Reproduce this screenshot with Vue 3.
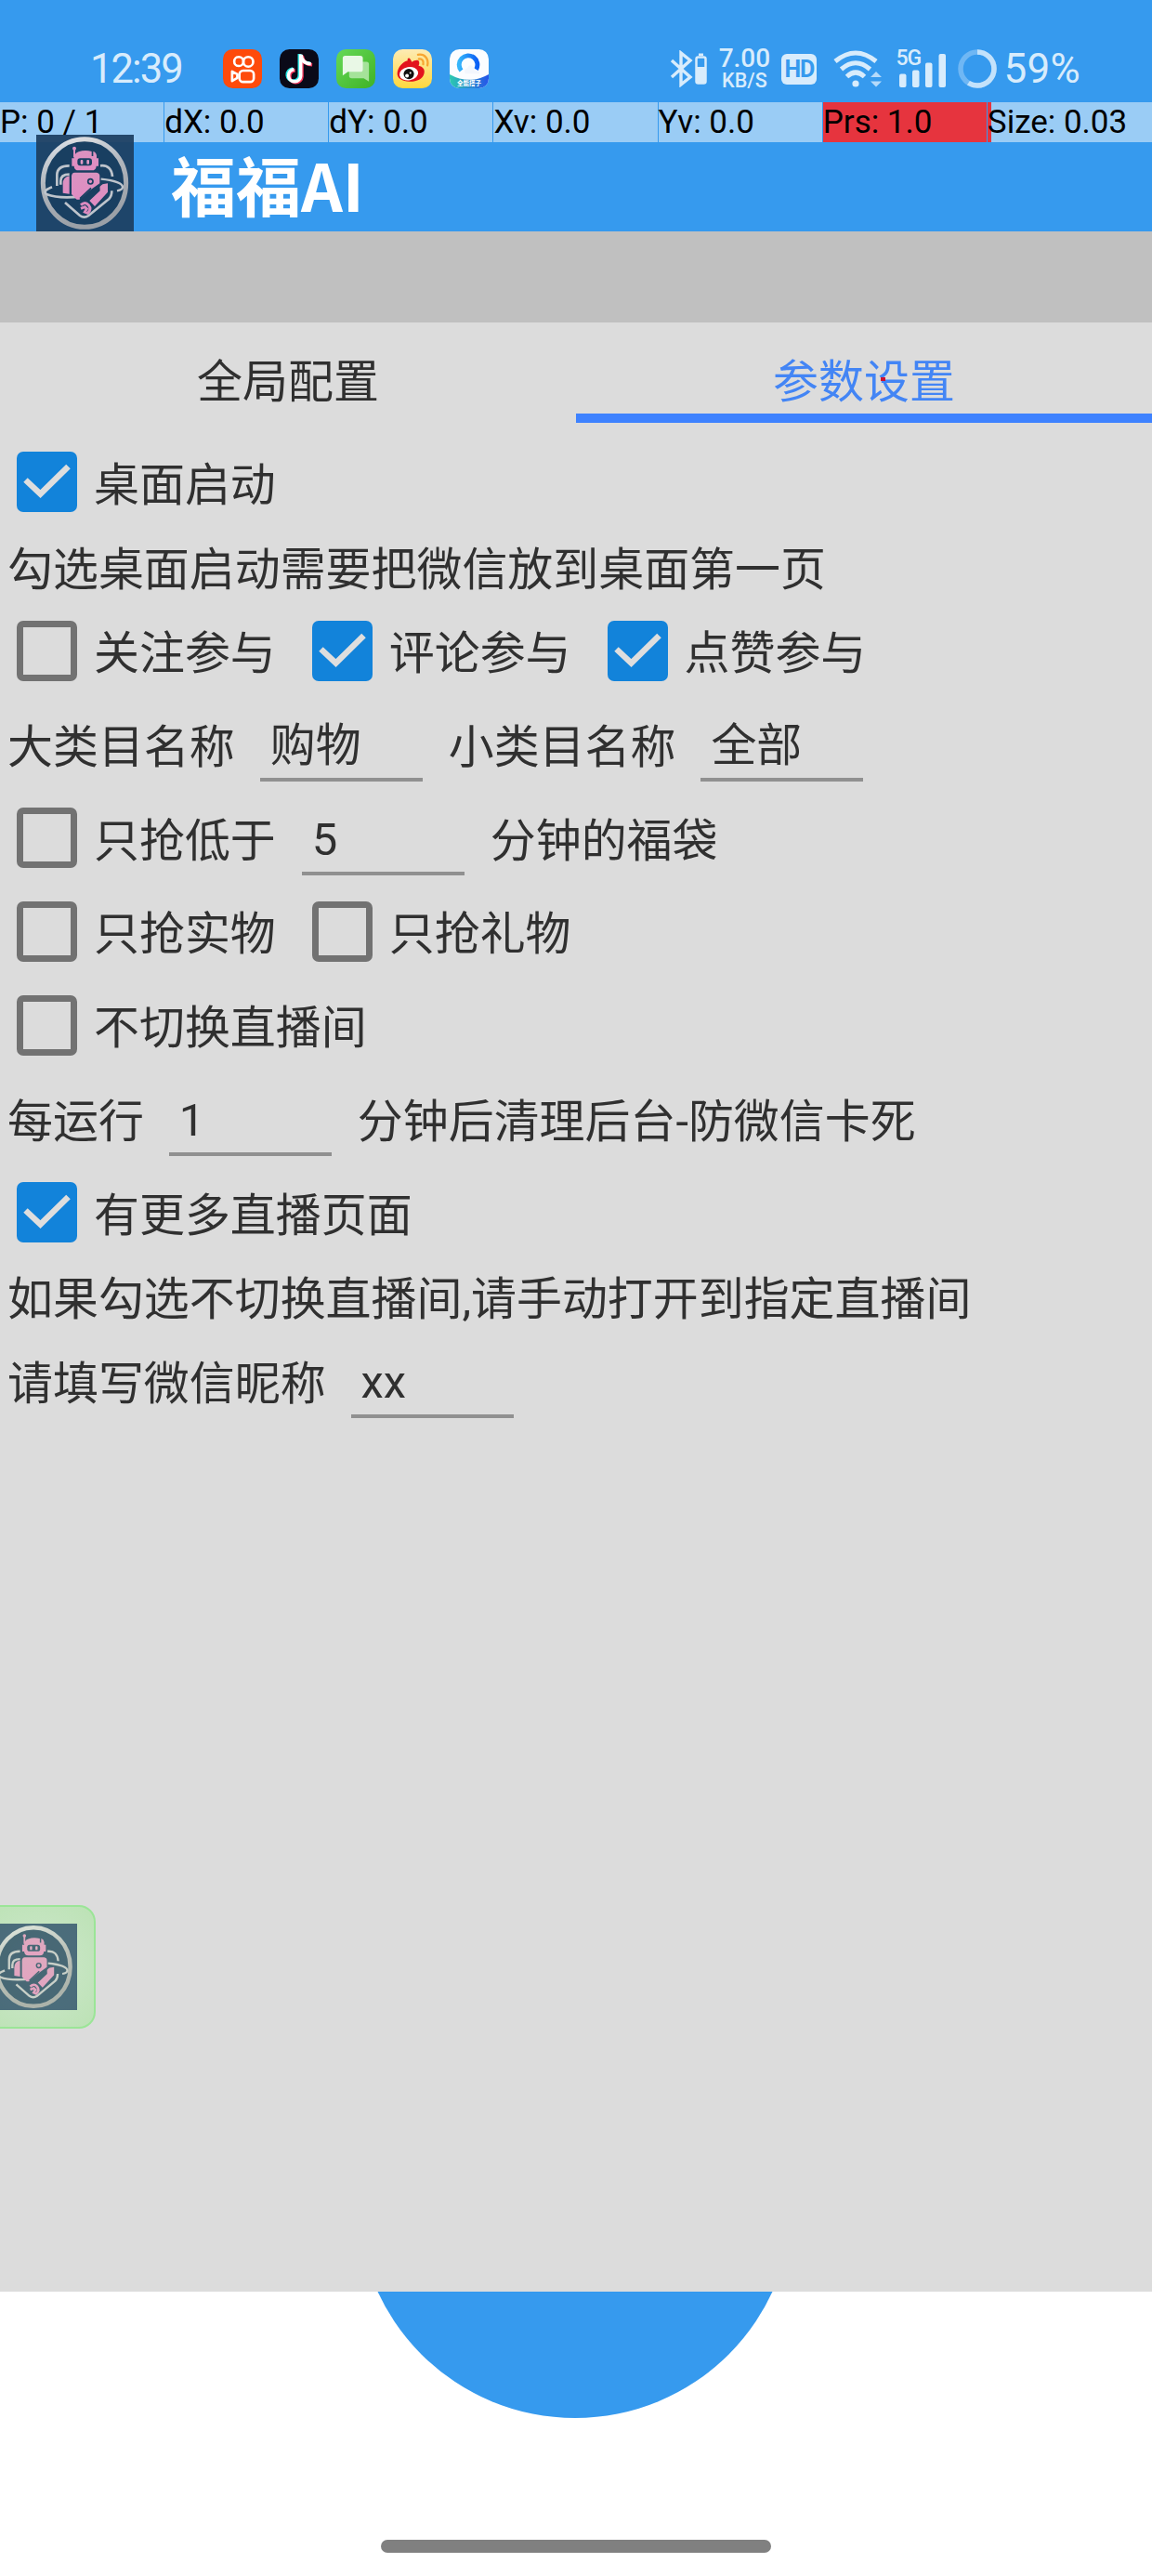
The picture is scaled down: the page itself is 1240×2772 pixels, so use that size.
<script setup>
import { reactive, ref } from 'vue'

const pointerStats = [
  { text: 'P: 0 / 1' },
  { text: 'dX: 0.0' },
  { text: 'dY: 0.0' },
  { text: 'Xv: 0.0' },
  { text: 'Yv: 0.0' },
  { text: 'Prs: 1.0', hot: true },
  { text: 'Size: 0.03', edge: true }
]

const tabs = ['全局配置', '参数设置']
const activeTab = ref(1)

// every row is a list of checks, labels and inputs, drawn from left to right
const rows = reactive([
  { tall: true, items: [{ type: 'check', text: '桌面启动', on: true }] },
  { items: [{ type: 'label', text: '勾选桌面启动需要把微信放到桌面第一页' }] },
  {
    tall: true,
    items: [
      { type: 'check', text: '关注参与', on: false },
      { type: 'check', text: '评论参与', on: true },
      { type: 'check', text: '点赞参与', on: true }
    ]
  },
  {
    tall: true,
    items: [
      { type: 'label', text: '大类目名称' },
      { type: 'input', value: '购物' },
      { type: 'label', text: '小类目名称' },
      { type: 'input', value: '全部' }
    ]
  },
  {
    tall: true,
    items: [
      { type: 'check', text: '只抢低于', on: false },
      { type: 'input', value: '5' },
      { type: 'label', text: '分钟的福袋' }
    ]
  },
  {
    tall: true,
    items: [
      { type: 'check', text: '只抢实物', on: false },
      { type: 'check', text: '只抢礼物', on: false }
    ]
  },
  { tall: true, items: [{ type: 'check', text: '不切换直播间', on: false }] },
  {
    tall: true,
    items: [
      { type: 'label', text: '每运行' },
      { type: 'input', value: '1' },
      { type: 'label', text: '分钟后清理后台-防微信卡死' }
    ]
  },
  { tall: true, items: [{ type: 'check', text: '有更多直播页面', on: true }] },
  { items: [{ type: 'label', text: '如果勾选不切换直播间,请手动打开到指定直播间' }] },
  {
    tall: true,
    items: [
      { type: 'label', text: '请填写微信昵称' },
      { type: 'input', value: 'xx' }
    ]
  }
])
</script>

<template>
  <div class="screen">
    <!-- shared robot emblem -->
    <svg class="defs" width="0" height="0">
      <defs>
        <linearGradient id="silver" x1="0" y1="0" x2="0.3" y2="1">
          <stop offset="0" stop-color="#eceaea" />
          <stop offset="0.5" stop-color="#b9b7b8" />
          <stop offset="1" stop-color="#a3a1a2" />
        </linearGradient>
        <linearGradient id="pink" x1="0" y1="0" x2="0" y2="1">
          <stop offset="0" stop-color="#e893bd" />
          <stop offset="1" stop-color="#ee8cc0" />
        </linearGradient>
      </defs>
      <symbol id="robot" viewBox="27 15 315 312" preserveAspectRatio="none">
        <rect x="27" y="15" width="315" height="312" fill="#1d3f61" />
        <ellipse cx="183" cy="171" rx="134" ry="142" fill="#173957" stroke="url(#silver)" stroke-width="15" />
        <g fill="none" stroke="#c9c8ca" stroke-width="8">
          <path d="M94 180 V145 C94 122 110 115 134 115" />
          <path d="M106 176 V164 C106 148 116 143 134 143" />
          <path d="M234 115 C258 112 271 126 273 150" />
          <path d="M120 234 L168 276 Q182 286 196 276 L262 222 Q271 213 271 196" />
          <path d="M236 158 C276 162 306 172 306 184 C306 190 300 194 288 196" stroke-width="7" />
          <path d="M78 184 C58 192 48 200 62 208 C82 216 124 219 170 215" stroke-width="8" />
        </g>
        <g fill="url(#pink)">
          <circle cx="150" cy="59" r="6" />
          <rect x="147" y="62" width="6" height="26" />
          <path d="M164 70 Q184 63 206 69 V84 H211 V69 Q220 71 222 82 V91 H228 V116 H221 Q220 130 206 130 H164 Q150 130 149 116 H142 V91 H149 Q150 74 164 70 Z" />
          <path d="M151 137 H222 Q232 139 232 148 V172 L198 196 L166 224 H158 L141 207 V148 Q142 138 151 137 Z" />
          <path d="M134 148 Q113 151 113 174 V203 L134 206 Z" />
          <path d="M232 176 L258 172 V200 L216 246 L199 228 L233 196 Z" />
        </g>
        <rect x="160" y="91" width="47" height="24" rx="9" fill="#173957" />
        <rect x="170" y="96" width="8" height="14" rx="3" fill="#ed9bc4" />
        <rect x="190" y="96" width="8" height="14" rx="3" fill="#ed9bc4" />
        <circle cx="202" cy="166" r="8" fill="none" stroke="#173957" stroke-width="5" />
        <path d="M168 221 L204 187 M174 230 L212 197 L240 172" fill="none" stroke="#173957" stroke-width="5" />
        <path d="M171 242 Q185 229 196 242 Q207 256 193 268 L184 264 L190 254 L184 248 L171 253" fill="none" stroke="#e98abd" stroke-width="9" />
      </symbol>
    </svg>

    <header class="status-bar">
      <span class="clock">12:39</span>
      <div class="app-icons">
        <svg viewBox="0 0 128 128">
          <rect width="128" height="128" rx="32" fill="#fe4a0b" />
          <g fill="none" stroke="#fff" stroke-width="8" stroke-linejoin="round">
            <circle cx="52" cy="40" r="15" />
            <circle cx="83" cy="41" r="16" />
            <rect x="54" y="70" width="47" height="37" rx="12" />
            <path d="M30 73 V104 L47 94 V82 Z" />
          </g>
        </svg>
        <svg viewBox="0 0 128 128">
          <rect width="128" height="128" rx="32" fill="#0a0a18" />
          <g fill="none" stroke-width="11">
            <path d="M68 16 V86 A20 20 0 1 1 46 65 M69 18 C71 36 83 46 102 47" stroke="#25e8e4" transform="translate(-3 -1)" />
            <path d="M68 16 V86 A20 20 0 1 1 46 65 M69 18 C71 36 83 46 102 47" stroke="#f8375c" transform="translate(5 4)" />
            <path d="M68 16 V86 A20 20 0 1 1 46 65 M69 18 C71 36 83 46 102 47" stroke="#fff" transform="translate(1 1)" />
          </g>
        </svg>
        <svg viewBox="0 0 128 128">
          <defs>
            <linearGradient id="green" x1="0" y1="0" x2="1" y2="1">
              <stop offset="0" stop-color="#66d957" />
              <stop offset="1" stop-color="#3fb226" />
            </linearGradient>
          </defs>
          <rect width="128" height="128" rx="32" fill="url(#green)" />
          <path d="M50 41 H99 Q107 41 107 49 V106 L90 95 H50 Q42 95 42 87 V49 Q42 41 50 41 Z" fill="#a5e39a" />
          <path d="M29 21 H79 Q87 21 87 29 V66 Q87 74 79 74 H38 L21 86 V29 Q21 21 29 21 Z" fill="#e9f8e6" />
        </svg>
        <svg viewBox="0 0 128 128">
          <defs>
            <linearGradient id="yellow" x1="0" y1="0" x2="0" y2="1">
              <stop offset="0" stop-color="#fdebb4" />
              <stop offset="1" stop-color="#ffd83d" />
            </linearGradient>
          </defs>
          <rect width="128" height="128" rx="32" fill="url(#yellow)" />
          <path d="M14 80 C14 60 34 38 48 37 C46 27 54 26 58 34 L62 42 C70 36 84 32 86 42 Q87 48 84 54 C98 57 106 66 102 80 C98 98 76 107 54 106 C30 105 14 96 14 80 Z" fill="#e3131d" />
          <ellipse cx="52" cy="80" rx="31" ry="22" fill="#fff" transform="rotate(-10 52 80)" />
          <circle cx="52" cy="81" r="17" fill="#111" />
          <circle cx="46" cy="87" r="6" fill="#fff" />
          <circle cx="57" cy="78" r="3" fill="#fff" />
          <path d="M82 18 C104 14 118 32 113 53 M85 32 C95 30 102 38 99 49" fill="none" stroke="#f7a531" stroke-width="7" stroke-linecap="round" />
        </svg>
        <svg viewBox="0 0 128 128">
          <defs>
            <clipPath id="tile"><rect width="128" height="128" rx="32" /></clipPath>
            <linearGradient id="ring" x1="0" y1="0" x2="1" y2="0">
              <stop offset="0" stop-color="#35b6fb" />
              <stop offset="1" stop-color="#0b5ff5" />
            </linearGradient>
            <linearGradient id="sea" x1="0" y1="0" x2="1" y2="0">
              <stop offset="0" stop-color="#2cc9b0" />
              <stop offset="1" stop-color="#2554ea" />
            </linearGradient>
          </defs>
          <g clip-path="url(#tile)">
            <rect width="128" height="128" fill="#fbfdff" />
            <path d="M0 82 Q64 118 128 82 V128 H0 Z" fill="url(#sea)" />
            <path d="M38 70 A30 30 0 1 1 87 66" fill="none" stroke="url(#ring)" stroke-width="15" />
            <path d="M52 80 Q44 66 58 62 Q64 46 78 58 Q84 64 80 69 Q98 66 98 80 Z" fill="#f3f7fd" />
            <text x="64" y="120" text-anchor="middle" class="tile-text">全能搭子</text>
          </g>
        </svg>
      </div>

      <div class="signals">
        <svg class="bluetooth" viewBox="0 0 41 40">
          <path d="M2 11 L22 29 L12 37 V3 L22 11 L2 29" fill="none" stroke="#d8ecfc" stroke-width="3.4" />
          <rect x="28.500" y="7.500" width="10" height="28" rx="2" fill="none" stroke="#d8ecfc" stroke-width="2.500" />
          <path d="M28 18 H39 V35 H28 Z M31 3.500 H36 V6 H31 Z" fill="#d8ecfc" />
        </svg>
        <div class="speed">
          <span class="speed-value">7.00</span>
          <span class="speed-unit">KB/S</span>
        </div>
        <span class="hd">HD</span>
        <svg class="wifi" viewBox="0 0 54 40">
          <g fill="none" stroke="#d8ecfc" stroke-width="5">
            <path d="M2 12 Q24 -6 46 12" />
            <path d="M8.500 20.500 Q24 7 39.500 20.500" />
            <path d="M14.500 28.500 Q24 19.500 33.500 28.500" />
          </g>
          <circle cx="24" cy="36" r="3.600" fill="#d8ecfc" />
          <path d="M40 29 L46 23 L52 29 Z M40 33.500 L46 39.500 L52 33.500 Z" fill="#b5dafa" />
        </svg>
        <div class="cell">
          <span class="cell-type">5G</span>
          <svg viewBox="0 0 52 37">
            <g fill="#d8ecfc">
              <rect x="0" y="21.500" width="7.500" height="14.500" rx="2" />
              <rect x="14" y="17.500" width="7.500" height="18.500" rx="2" />
              <rect x="28" y="9.500" width="7.500" height="26.500" rx="2" />
              <rect x="42.500" y="0" width="7.500" height="36" rx="2" />
            </g>
          </svg>
        </div>
        <svg class="ring" viewBox="0 0 42 42">
          <circle cx="21" cy="21" r="18" fill="none" stroke="#6fb7f4" stroke-width="5.500" />
          <circle cx="21" cy="21" r="18" fill="none" stroke="#c3e2fb" stroke-width="5.500" pathLength="100" stroke-dasharray="59 41" transform="rotate(-90 21 21)" />
        </svg>
        <span class="percent">59%</span>
      </div>
    </header>

    <div class="pointer-bar">
      <span
        v-for="stat in pointerStats"
        :key="stat.text"
        class="pointer-cell"
        :class="{ hot: stat.hot, edge: stat.edge }"
      >{{ stat.text }}</span>
    </div>

    <div class="title-bar">
      <svg class="logo"><use href="#robot" /></svg>
      <h1>福福AI</h1>
    </div>
    <div class="strip"></div>

    <main class="panel">
      <nav class="tabs">
        <button
          v-for="(tab, i) in tabs"
          :key="tab"
          class="tab"
          :class="{ active: i === activeTab }"
          @click="activeTab = i"
        >{{ tab }}</button>
      </nav>

      <div v-for="(row, r) in rows" :key="r" class="row" :class="{ tall: row.tall }">
        <template v-for="(item, i) in row.items" :key="i">
          <span v-if="item.type === 'check'" class="check" @click="item.on = !item.on">
            <span class="box" :class="{ on: item.on }">
              <svg v-if="item.on" viewBox="0 0 65 65">
                <path d="M9.500 30.500 L25.500 45.500 L55.500 16" fill="none" stroke="#dedede" stroke-width="6.500" />
              </svg>
            </span>
            <span class="label">{{ item.text }}</span>
          </span>
          <span v-else-if="item.type === 'label'" class="label">{{ item.text }}</span>
          <input v-else v-model="item.value" class="field" type="text" />
        </template>
      </div>
    </main>

    <footer class="bottom">
      <div class="disc"></div>
      <div class="home-bar"></div>
    </footer>

    <div class="float-ball">
      <svg class="float-logo"><use href="#robot" /></svg>
    </div>
    <i class="touch-point"></i>
  </div>
</template>

<style>
body {
  margin: 0;
  background: #fff;
}
</style>

<style scoped>
.screen {
  position: relative;
  width: 1240px;
  height: 2772px;
  overflow: hidden;
  display: flex;
  flex-direction: column;
  background: #fff;
  font-family: Roboto, "Noto Sans CJK SC", sans-serif;
  color: #303030;
}

.defs {
  position: absolute;
}

.status-bar {
  box-sizing: border-box;
  height: 110px;
  padding: 38px 77px 0 97px;
  display: flex;
  align-items: center;
  background: #369aee;
  color: #d8ecfc;
}

.clock {
  width: 143px;
  font-size: 43.5px;
  letter-spacing: -1.9px;
}

.app-icons {
  display: flex;
  gap: 19px;
}

.app-icons svg {
  width: 42px;
  height: 42px;
}

.tile-text {
  font-size: 20px;
  font-weight: 700;
  fill: #fff;
}

.signals {
  margin-left: auto;
  display: flex;
  align-items: center;
}

.bluetooth {
  width: 41px;
  height: 40px;
}

.speed {
  width: 56px;
  margin-left: 11px;
  display: flex;
  flex-direction: column;
  align-items: center;
  font-weight: 500;
}

.speed-value {
  font-size: 28px;
  line-height: 24px;
}

.speed-unit {
  font-size: 21.5px;
  line-height: 23px;
}

.hd {
  width: 38px;
  height: 33px;
  margin-left: 12px;
  border-radius: 6px;
  background: #d8ecfc;
  color: #369aee;
  font-size: 25px;
  font-weight: 700;
  line-height: 33px;
  letter-spacing: -1px;
  text-align: center;
}

.wifi {
  width: 54px;
  height: 40px;
  margin-left: 18px;
}

.cell {
  position: relative;
  width: 56px;
  height: 42px;
  margin-left: 13px;
  display: flex;
  align-items: flex-end;
  justify-content: flex-end;
}

.cell svg {
  width: 52px;
  height: 37px;
}

.cell-type {
  position: absolute;
  left: 0;
  top: 0;
  font-size: 23px;
  font-weight: 500;
  line-height: 20px;
  letter-spacing: -1px;
}

.ring {
  width: 42px;
  height: 42px;
  margin-left: 11px;
}

.percent {
  margin-left: 7px;
  font-size: 44px;
  letter-spacing: 0.3px;
}

.pointer-bar {
  height: 43px;
  display: grid;
  grid-template-columns: repeat(7, 1fr);
  background: #369aee;
}

.pointer-cell {
  margin-right: 1px;
  background: #9accf5;
  color: #000;
  font-size: 35px;
  line-height: 44px;
  white-space: nowrap;
}

.pointer-cell.hot {
  background: #e6343e;
}

.pointer-cell.edge {
  margin-right: 0;
  background: linear-gradient(90deg, #e6343e 4px, #9accf5 4px);
}

.title-bar {
  height: 96px;
  padding-left: 39px;
  display: flex;
  align-items: flex-end;
  background: #369aee;
}

.logo {
  width: 105px;
  height: 104px;
  opacity: 0.93;
}

.title-bar h1 {
  margin: 0 0 3px 40px;
  color: #fff;
  font-family: "Noto Sans CJK SC", sans-serif;
  font-size: 70px;
  font-weight: 700;
  line-height: 96px;
}

.strip {
  height: 98px;
  background: #c0c0c0;
}

.panel {
  height: 2119px;
  background: #dcdcdc;
  font-size: 48.95px;
}

.tabs {
  display: grid;
  grid-template-columns: 1fr 1fr;
  margin-bottom: 15px;
}

.tab {
  box-sizing: border-box;
  height: 108px;
  padding: 32px 0 0;
  border: 0;
  border-bottom: 10px solid transparent;
  background: none;
  color: inherit;
  font: inherit;
  line-height: 66px;
}

.tab.active {
  border-bottom-color: #3e82ff;
  color: #4385f5;
}

.row {
  height: 80.4px;
  padding-left: 8px;
  display: flex;
  align-items: center;
  white-space: nowrap;
  line-height: 80px;
}

.row.tall {
  height: 100.8px;
}

.label {
  padding-top: 5px;
}

.check {
  display: flex;
  align-items: center;
  margin: 0 19px 0 10px;
  gap: 18px;
}

.check + .check {
  margin-left: 20px;
}

.box {
  box-sizing: border-box;
  width: 65px;
  height: 65px;
  margin-top: -3px;
  border: 7px solid #727272;
  border-radius: 7px;
}

.box.on {
  border: 0;
  background: #1283da;
}

.box svg {
  display: block;
  width: 65px;
  height: 65px;
}

.field {
  box-sizing: border-box;
  align-self: flex-end;
  width: 175px;
  height: 75px;
  margin: 0 28px 12px 27px;
  padding: 4px 0 0 11px;
  border: 0;
  border-bottom: 4px solid #909090;
  outline: none;
  background: none;
  color: inherit;
  font: inherit;
}

.check + .field {
  margin-left: 9px;
}

.bottom {
  position: relative;
  flex: 1;
  overflow: hidden;
  display: flex;
  flex-direction: column;
  align-items: center;
  justify-content: flex-end;
}

/* only the lower part of the disc shows under the panel */
.disc {
  position: absolute;
  left: 385px;
  top: -332px;
  width: 468px;
  height: 468px;
  border-radius: 50%;
  background: #369aee;
}

.home-bar {
  width: 420px;
  height: 14px;
  margin-bottom: 25px;
  border-radius: 7px;
  background: #808080;
}

.float-ball {
  position: absolute;
  left: -20px;
  top: 2050px;
  box-sizing: border-box;
  width: 123px;
  height: 133px;
  padding: 18px 0 0 8px;
  border: 2px solid #9be597;
  border-radius: 18px;
  background: radial-gradient(circle, #c9e6c6 30%, #bce2b5 100%);
}

.float-logo {
  width: 93px;
  height: 93px;
  opacity: 0.72;
}

.touch-point {
  position: absolute;
  left: 948px;
  top: 406px;
  width: 5px;
  height: 4px;
  background: #cf1030;
}
</style>
